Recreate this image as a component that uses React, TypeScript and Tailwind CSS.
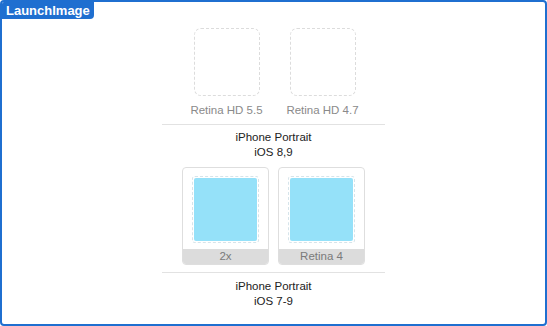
import React from "react";

const font = { fontFamily: '"Liberation Sans", Arial, sans-serif' };

function EmptySlot({ label }: { label: string }) {
  return (
    <div className="flex flex-col items-center w-[80px]">
      <div className="w-[66px] h-[68px] rounded-[7px] border border-dashed border-[#dcdcdc]" />
      <div className="mt-[7px] text-[11.5px] leading-[14px] text-[#8a8a8a]">{label}</div>
    </div>
  );
}

function FilledSlot({ label }: { label: string }) {
  return (
    <div className="w-[87px] h-[98px] rounded-[4px] border border-[#dedede] flex flex-col overflow-hidden bg-white">
      <div className="flex-1 flex items-center justify-center">
        <div className="p-px border border-dashed border-[#d6e4ea] rounded-[3px] mt-[1px]">
          <div className="w-[63px] h-[63px] bg-[#95e1f9] rounded-[2px]" />
        </div>
      </div>
      <div className="h-[15px] bg-[#dcdcdc] text-[11.5px] leading-[15px] text-[#7a7a7a] text-center">{label}</div>
    </div>
  );
}

export default function App() {
  return (
    <div style={font} className="relative w-[547px] h-[326px] bg-white border-2 border-[#1f6fd0] rounded-[4px] overflow-hidden">
      <div className="absolute left-0 top-0 h-[17px] px-[4px] bg-[#1f6fd0] rounded-br-[4px] text-white font-bold text-[13px] leading-[17px]">
        LaunchImage
      </div>
      <div className="flex flex-col items-center pt-[26px]">
        <div className="flex gap-[16px] ml-[2px]">
          <EmptySlot label="Retina HD 5.5" />
          <EmptySlot label="Retina HD 4.7" />
        </div>
        <div className="mt-[7px] w-[223px] h-px bg-[#e2e2e2]" />
        <div className="mt-[5px] text-[11.5px] leading-[15px] text-[#222] text-center">
          <div>iPhone Portrait</div>
          <div>iOS 8,9</div>
        </div>
        <div className="mt-[7px] flex gap-[9px]">
          <FilledSlot label="2x" />
          <FilledSlot label="Retina 4" />
        </div>
        <div className="mt-[7px] w-[223px] h-px bg-[#e2e2e2]" />
        <div className="mt-[6px] text-[11.5px] leading-[15px] text-[#222] text-center">
          <div>iPhone Portrait</div>
          <div>iOS 7-9</div>
        </div>
      </div>
    </div>
  );
}
